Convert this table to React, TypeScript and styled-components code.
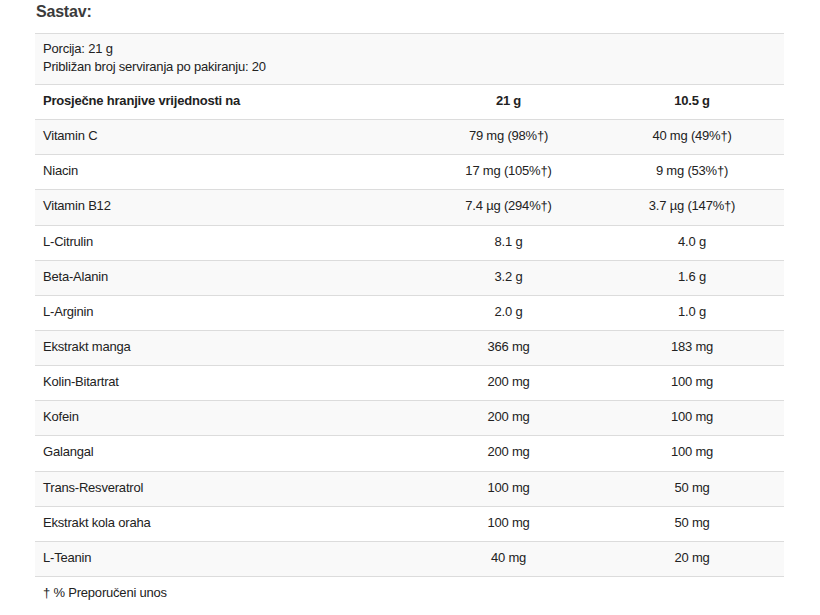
import React, { FC } from 'react';
import styled, { createGlobalStyle } from 'styled-components';

const GlobalStyle = createGlobalStyle`
  html, body {
    margin: 0;
    padding: 0;
    background: #fff;
  }
  body {
    font-family: "Liberation Sans", Arial, sans-serif;
    color: #222;
  }
`;

type NutrientRow = {
  name: string,
  full: string,
  half: string,
};

const rows: NutrientRow[] = [
  { name: 'Vitamin C', full: '79 mg (98%†)', half: '40 mg (49%†)' },
  { name: 'Niacin', full: '17 mg (105%†)', half: '9 mg (53%†)' },
  { name: 'Vitamin B12', full: '7.4 µg (294%†)', half: '3.7 µg (147%†)' },
  { name: 'L-Citrulin', full: '8.1 g', half: '4.0 g' },
  { name: 'Beta-Alanin', full: '3.2 g', half: '1.6 g' },
  { name: 'L-Arginin', full: '2.0 g', half: '1.0 g' },
  { name: 'Ekstrakt manga', full: '366 mg', half: '183 mg' },
  { name: 'Kolin-Bitartrat', full: '200 mg', half: '100 mg' },
  { name: 'Kofein', full: '200 mg', half: '100 mg' },
  { name: 'Galangal', full: '200 mg', half: '100 mg' },
  { name: 'Trans-Resveratrol', full: '100 mg', half: '50 mg' },
  { name: 'Ekstrakt kola oraha', full: '100 mg', half: '50 mg' },
  { name: 'L-Teanin', full: '40 mg', half: '20 mg' },
];

const Page = styled.div`
  padding: 2px 36px 0 35px;
  width: 749px;
`;

const Title = styled.h3`
  margin: 0 0 11px 1px;
  font-size: 16px;
  line-height: 20px;
  font-weight: bold;
  letter-spacing: -0.2px;
  color: #3b3b3b;
`;

const Table = styled.table`
  width: 749px;
  border-collapse: collapse;
  table-layout: fixed;
  font-size: 13px;
  line-height: 17px;
  letter-spacing: -0.2px;
`;

const Row = styled.tr<{ $shaded?: boolean }>`
  background: ${(p) => (p.$shaded ? '#f9f9f9' : '#fff')};
  border-top: 1px solid #dcdcdc;
`;

const Cell = styled.td<{ $center?: boolean, $bold?: boolean }>`
  height: 17.15px;
  padding: 7px 8px 10px;
  vertical-align: top;
  text-align: ${(p) => (p.$center ? 'center' : 'left')};
  font-weight: ${(p) => (p.$bold ? 'bold' : 'normal')};
`;

const InfoCell = styled.td`
  padding: 6px 8px 8px;
  line-height: 18px;
  vertical-align: top;
`;

const NoteCell = styled.td`
  padding: 7px 8px 12px;
  vertical-align: top;
`;

const App: FC = () => (
  <Page>
    <GlobalStyle />
    <Title>Sastav:</Title>
    <Table>
      <colgroup>
        <col style={{ width: 382 }} />
        <col style={{ width: 183 }} />
        <col style={{ width: 184 }} />
      </colgroup>
      <tbody>
        <Row $shaded>
          <InfoCell colSpan={3}>
            Porcija: 21 g
            <br />
            Približan broj serviranja po pakiranju: 20
          </InfoCell>
        </Row>
        <Row>
          <Cell $bold>Prosječne hranjive vrijednosti na</Cell>
          <Cell $bold $center>21 g</Cell>
          <Cell $bold $center>10.5 g</Cell>
        </Row>
        {rows.map((r, i) => (
          <Row key={r.name} $shaded={i % 2 === 0}>
            <Cell>{r.name}</Cell>
            <Cell $center>{r.full}</Cell>
            <Cell $center>{r.half}</Cell>
          </Row>
        ))}
        <Row>
          <NoteCell colSpan={3}>† % Preporučeni unos</NoteCell>
        </Row>
      </tbody>
    </Table>
  </Page>
);

export default App;
